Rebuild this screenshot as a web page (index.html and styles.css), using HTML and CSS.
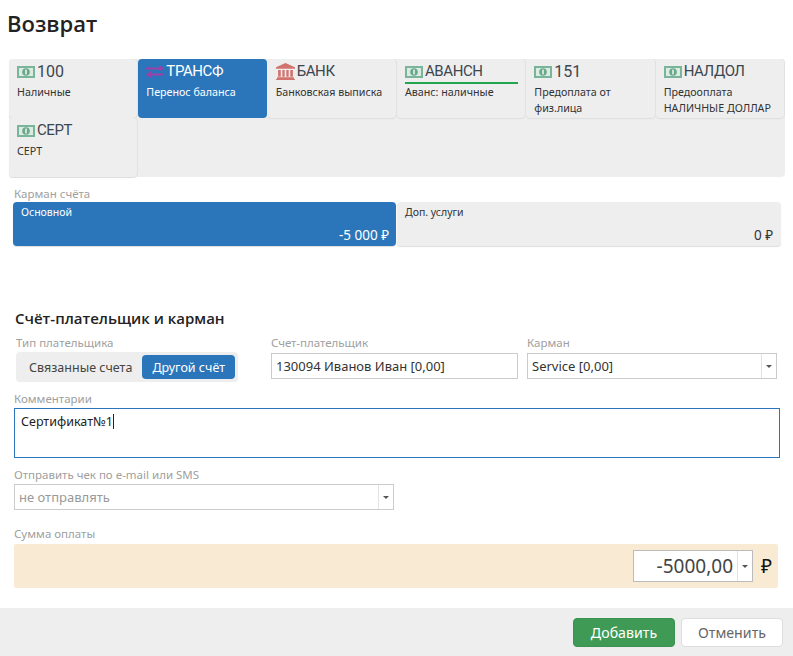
FILE: index.html
```html
<!DOCTYPE html>
<html lang="ru">
<head>
<meta charset="utf-8">
<title>Возврат</title>
<link rel="stylesheet" href="styles.css">
</head>
<body>
<svg class="defs" width="0" height="0">
  <symbol id="cash" viewBox="0 0 18 12">
    <rect width="18" height="12" fill="#78b59b"/>
    <rect x="2" y="2" width="14" height="8" fill="#dcebe2"/>
    <circle cx="9" cy="6" r="3.800" fill="#6aa88c"/>
    <rect x="8.200" y="3.600" width="1.600" height="4.800" fill="#e8f2ea"/>
  </symbol>
  <symbol id="bank" viewBox="0 0 18 16">
    <path d="M9 0 18 4v1.500H0V4z" fill="#d2736d"/>
    <path d="M2 6.500h2.500V13H2zM6 6.500h2.200V13H6zM9.800 6.500H12V13H9.800zM13.500 6.500H16V13h-2.500zM1 13.500h16V15H1zM0 15h18v1H0z" fill="#d2736d"/>
  </symbol>
  <symbol id="swap" viewBox="0 0 18 13">
    <path d="M0 2.500h13V0l5 3.500-5 3.300V4.500H0zM18 8.500H5V6.200L0 9.500 5 13v-2.500h13z" fill="#a13fa8"/>
  </symbol>
</svg>

<main class="page">
  <h1 class="title">Возврат</h1>

  <section class="tiles">
    <div class="tile">
      <div class="tile-head"><svg class="ico-cash"><use href="#cash"/></svg><span>100</span></div>
      <div class="tile-sub">Наличные</div>
    </div>
    <div class="tile tile-active">
      <div class="tile-head"><svg class="ico-swap"><use href="#swap"/></svg><span class="tile-word">ТРАНСФ</span></div>
      <div class="tile-sub">Перенос баланса</div>
    </div>
    <div class="tile">
      <div class="tile-head"><svg class="ico-bank"><use href="#bank"/></svg><span class="tile-word">БАНК</span></div>
      <div class="tile-sub">Банковская выписка</div>
    </div>
    <div class="tile">
      <div class="tile-head tile-head-marked"><svg class="ico-cash"><use href="#cash"/></svg><span class="tile-word">АВАНСН</span></div>
      <div class="tile-sub">Аванс: наличные</div>
    </div>
    <div class="tile">
      <div class="tile-head"><svg class="ico-cash"><use href="#cash"/></svg><span>151</span></div>
      <div class="tile-sub">Предоплата от физ.лица</div>
    </div>
    <div class="tile">
      <div class="tile-head"><svg class="ico-cash"><use href="#cash"/></svg><span class="tile-word">НАЛДОЛ</span></div>
      <div class="tile-sub">Предооплата НАЛИЧНЫЕ ДОЛЛАР</div>
    </div>
    <div class="tile">
      <div class="tile-head"><svg class="ico-cash"><use href="#cash"/></svg><span class="tile-word">СЕРТ</span></div>
      <div class="tile-sub">СЕРТ</div>
    </div>
  </section>

  <section class="pockets-block">
    <div class="label">Карман счёта</div>
    <div class="pockets">
      <div class="pocket pocket-active">
        <div class="pocket-name">Основной</div>
        <div class="pocket-sum">-5 000 ₽</div>
      </div>
      <div class="pocket">
        <div class="pocket-name">Доп. услуги</div>
        <div class="pocket-sum">0 ₽</div>
      </div>
    </div>
  </section>

  <h2 class="section-title">Счёт-плательщик и карман</h2>

  <section class="payer-row">
    <div class="col-type">
      <div class="label">Тип плательщика</div>
      <div class="segmented">
        <span class="seg">Связанные счета</span>
        <span class="seg seg-active">Другой счёт</span>
      </div>
    </div>
    <div class="col-account">
      <div class="label">Счет-плательщик</div>
      <div class="field">130094 Иванов Иван [0,00]</div>
    </div>
    <div class="col-pocket">
      <div class="label">Карман</div>
      <div class="field field-select">
        <span class="field-text">Service [0,00]</span>
        <span class="caret-box"><i class="caret"></i></span>
      </div>
    </div>
  </section>

  <section class="comment-block">
    <div class="label">Комментарии</div>
    <div class="textarea">Сертификат№1<i class="text-cursor"></i></div>
  </section>

  <section class="send-block">
    <div class="label">Отправить чек по e-mail или SMS</div>
    <div class="field field-select field-muted">
      <span class="field-text">не отправлять</span>
      <span class="caret-box"><i class="caret"></i></span>
    </div>
  </section>

  <section class="amount-block">
    <div class="label">Сумма оплаты</div>
    <div class="amount-band">
      <div class="amount-input">
        <span class="amount-value">-5000,00</span>
        <span class="caret-box"><i class="caret"></i></span>
      </div>
      <span class="ruble">₽</span>
    </div>
  </section>
</main>

<footer class="footer">
  <button class="btn btn-primary">Добавить</button>
  <button class="btn">Отменить</button>
</footer>
</body>
</html>
```
FILE: styles.css
```css
* { box-sizing: border-box; }
html, body { margin: 0; padding: 0; }
body {
  width: 793px;
  height: 656px;
  overflow: hidden;
  background: #fff;
  color: #333;
  font-family: "Noto Sans", "Open Sans", sans-serif;
  font-size: 12px;
  display: flex;
  flex-direction: column;
}
.defs { position: absolute; }
.page { flex: 1; padding: 0 0 0 8px; }

.title {
  margin: 0 0 0 -1px;
  padding-top: 7px;
  height: 59px;
  font-family: "Open Sans", sans-serif;
  font-size: 22px;
  line-height: 32px;
  font-weight: 600;
  color: #222;
}

.tiles {
  margin-left: 1px;
  width: 776px;
  height: 118px;
  background: #eee;
  border-radius: 4px;
  display: grid;
  grid-template-columns: repeat(6, 1fr);
  grid-auto-rows: 59px;
}
.tile {
  margin-right: 1px;
  padding: 2px 7px 0 8px;
  background: #eee;
  border-radius: 4px;
  box-shadow: 0 1px 1px #ddd, 1px 0 0 #e2e2e2;
}
.tile-active { background: #2b76ba; color: #fff; box-shadow: none; }
.tile-head {
  display: flex;
  align-items: center;
  gap: 2px;
  height: 21px;
  font-family: "Roboto", sans-serif;
  font-size: 16px;
  line-height: 21px;
  color: #3c4650;
}
.tile-word { font-size: 15px; letter-spacing: -0.4px; }
.tile-active .tile-head { color: #fff; }
.tile-head-marked { position: relative; }
.tile-head-marked::after {
  content: "";
  position: absolute;
  left: 0;
  right: 0;
  bottom: -2px;
  height: 2px;
  background: #22a650;
}
.ico-cash { width: 18px; height: 12px; flex: none; }
.ico-swap { width: 18px; height: 13px; flex: none; }
.ico-bank { width: 19px; height: 17px; flex: none; }
.tile-sub {
  margin-top: 2px;
  font-size: 10.700px;
  line-height: 16px;
  color: #333;
}
.tile-active .tile-sub { color: #fff; }

.label {
  font-size: 11.500px;
  line-height: 14px;
  color: #a0a0a0;
}

.pockets-block { margin: 9px 0 0 6px; }
.pockets-block .label { height: 16px; line-height: 15px; }
.pockets {
  margin-left: -1px;
  width: 768px;
  display: grid;
  grid-template-columns: 383px 384px;
  column-gap: 1px;
}
.pocket {
  height: 44px;
  padding: 3px 8px 2px 8px;
  background: #eee;
  border-radius: 4px;
  box-shadow: 0 1px 1px #ddd;
  display: flex;
  flex-direction: column;
  justify-content: space-between;
}
.pocket-active { background: #2b76ba; color: #fff; padding-right: 7px; }
.pocket-name { font-size: 10.500px; line-height: 14px; }
.pocket-sum { font-size: 13.500px; line-height: 18px; text-align: right; }

.section-title {
  margin: 62px 0 0 7px;
  height: 20px;
  font-family: "Open Sans", sans-serif;
  font-size: 15px;
  line-height: 20px;
  font-weight: 600;
  color: #222;
}

.payer-row {
  margin: 8px 0 0 8px;
  display: flex;
}
.col-type { width: 255px; }
.col-account { width: 256px; }
.col-pocket { width: 250px; }
.payer-row .label { height: 16px; }

.segmented {
  width: 222px;
  height: 30px;
  padding: 3px;
  background: #eee;
  border-radius: 4px;
  display: flex;
  justify-content: flex-end;
  align-items: stretch;
  font-size: 12.500px;
}
.seg {
  display: flex;
  align-items: center;
  padding: 0 10px;
  white-space: nowrap;
  color: #444;
}
.seg-active {
  width: 93px;
  justify-content: center;
  padding: 0;
  background: #2b76ba;
  color: #fff;
  border-radius: 4px;
}

.field {
  height: 26px;
  border: 1px solid #ccc;
  background: #fff;
  display: flex;
  align-items: center;
  padding-left: 4px;
  font-size: 13px;
  color: #333;
  width: 247px;
}
.col-account .field, .col-pocket .field { margin-top: 1px; }
.field-select { justify-content: space-between; width: 250px; }
.field-text { white-space: nowrap; }
.caret-box {
  width: 15px;
  height: 100%;
  border-left: 1px solid #e2e2e2;
  display: flex;
  align-items: center;
  justify-content: center;
  flex: none;
}
.caret {
  width: 0;
  height: 0;
  border-left: 3px solid transparent;
  border-right: 3px solid transparent;
  border-top: 3px solid #555;
}

.comment-block { margin: 10px 0 0 6px; }
.comment-block .label { height: 16px; }
.textarea {
  width: 766px;
  height: 50px;
  border: 1px solid #2b76ba;
  padding: 4px 0 0 6px;
  font-size: 12.500px;
  line-height: 18px;
  color: #222;
  background: #fff;
}
.text-cursor {
  display: inline-block;
  width: 1px;
  height: 15px;
  background: #222;
  vertical-align: -3px;
}

.send-block { margin: 10px 0 0 6px; }
.send-block .label { height: 16px; }
.send-block .field { width: 380px; }
.field-muted { color: #999; }

.amount-block { margin: 17px 0 0 6px; }
.amount-block .label { height: 17px; }
.amount-band {
  width: 764px;
  height: 44px;
  background: #f9ebd3;
  border-radius: 2px;
  display: flex;
  align-items: center;
  justify-content: flex-end;
  padding-right: 5px;
}
.amount-input {
  width: 120px;
  height: 32px;
  border: 1px solid #bbb;
  background: #fff;
  display: flex;
  align-items: center;
  justify-content: flex-end;
}
.amount-value {
  font-size: 19px;
  padding-right: 4px;
  color: #444;
}
.ruble {
  width: 20px;
  padding-right: 1px;
  text-align: right;
  font-size: 19px;
  color: #111;
}

.footer {
  height: 48px;
  background: #eee;
  display: flex;
  justify-content: flex-end;
  gap: 6px;
  padding: 10px 10px 0 0;
}
.btn {
  width: 102px;
  height: 29px;
  font-family: "Noto Sans", sans-serif;
  font-size: 14.200px;
  border: 1px solid #ddd;
  border-radius: 4px;
  background: #fff;
  color: #666;
  padding: 0;
}
.btn-primary { background: #3f9a55; border-color: #3a9150; color: #fff; }
```
